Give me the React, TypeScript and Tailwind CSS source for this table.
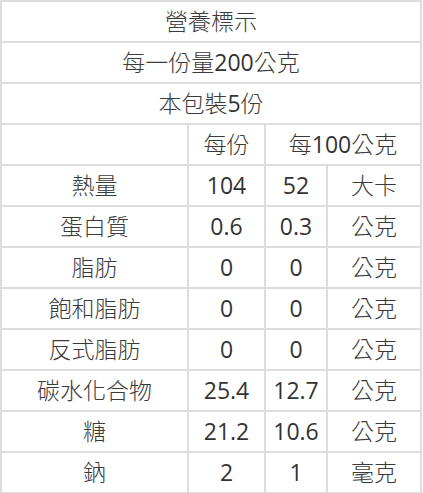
import React from "react";

const rows = [
  { name: "熱量", per: "104", per100: "52", unit: "大卡" },
  { name: "蛋白質", per: "0.6", per100: "0.3", unit: "公克" },
  { name: "脂肪", per: "0", per100: "0", unit: "公克" },
  { name: "飽和脂肪", per: "0", per100: "0", unit: "公克" },
  { name: "反式脂肪", per: "0", per100: "0", unit: "公克" },
  { name: "碳水化合物", per: "25.4", per100: "12.7", unit: "公克" },
  { name: "糖", per: "21.2", per100: "10.6", unit: "公克" },
  { name: "鈉", per: "2", per100: "1", unit: "毫克" },
];

const cell = "border-2 border-[#dddddd] h-[41px] p-0 text-center align-middle";
const num = "font-normal text-[#333333]";

export default function App() {
  return (
    <div className="bg-white w-[423px] h-[493px] overflow-hidden">
      <table
        className="w-[422px] border-collapse table-fixed text-[23px] leading-none font-light text-[#3a3a3a]"
        style={{ fontFamily: '"Open Sans", "Noto Sans CJK TC", sans-serif' }}
      >
        <colgroup>
          <col className="w-[187px]" />
          <col className="w-[77px]" />
          <col className="w-[62px]" />
          <col />
        </colgroup>
        <tbody>
          <tr>
            <td colSpan={4} className={cell}>營養標示</td>
          </tr>
          <tr>
            <td colSpan={4} className={cell}>
              每一份量<span className={num}>200</span>公克
            </td>
          </tr>
          <tr>
            <td colSpan={4} className={cell}>
              本包裝<span className={num}>5</span>份
            </td>
          </tr>
          <tr>
            <td className={cell}></td>
            <td className={cell}>每份</td>
            <td colSpan={2} className={cell}>
              每<span className={num}>100</span>公克
            </td>
          </tr>
          {rows.map((r) => (
            <tr key={r.name}>
              <td className={cell}>{r.name}</td>
              <td className={`${cell} ${num}`}>{r.per}</td>
              <td className={`${cell} ${num}`}>{r.per100}</td>
              <td className={cell}>{r.unit}</td>
            </tr>
          ))}
        </tbody>
      </table>
    </div>
  );
}
